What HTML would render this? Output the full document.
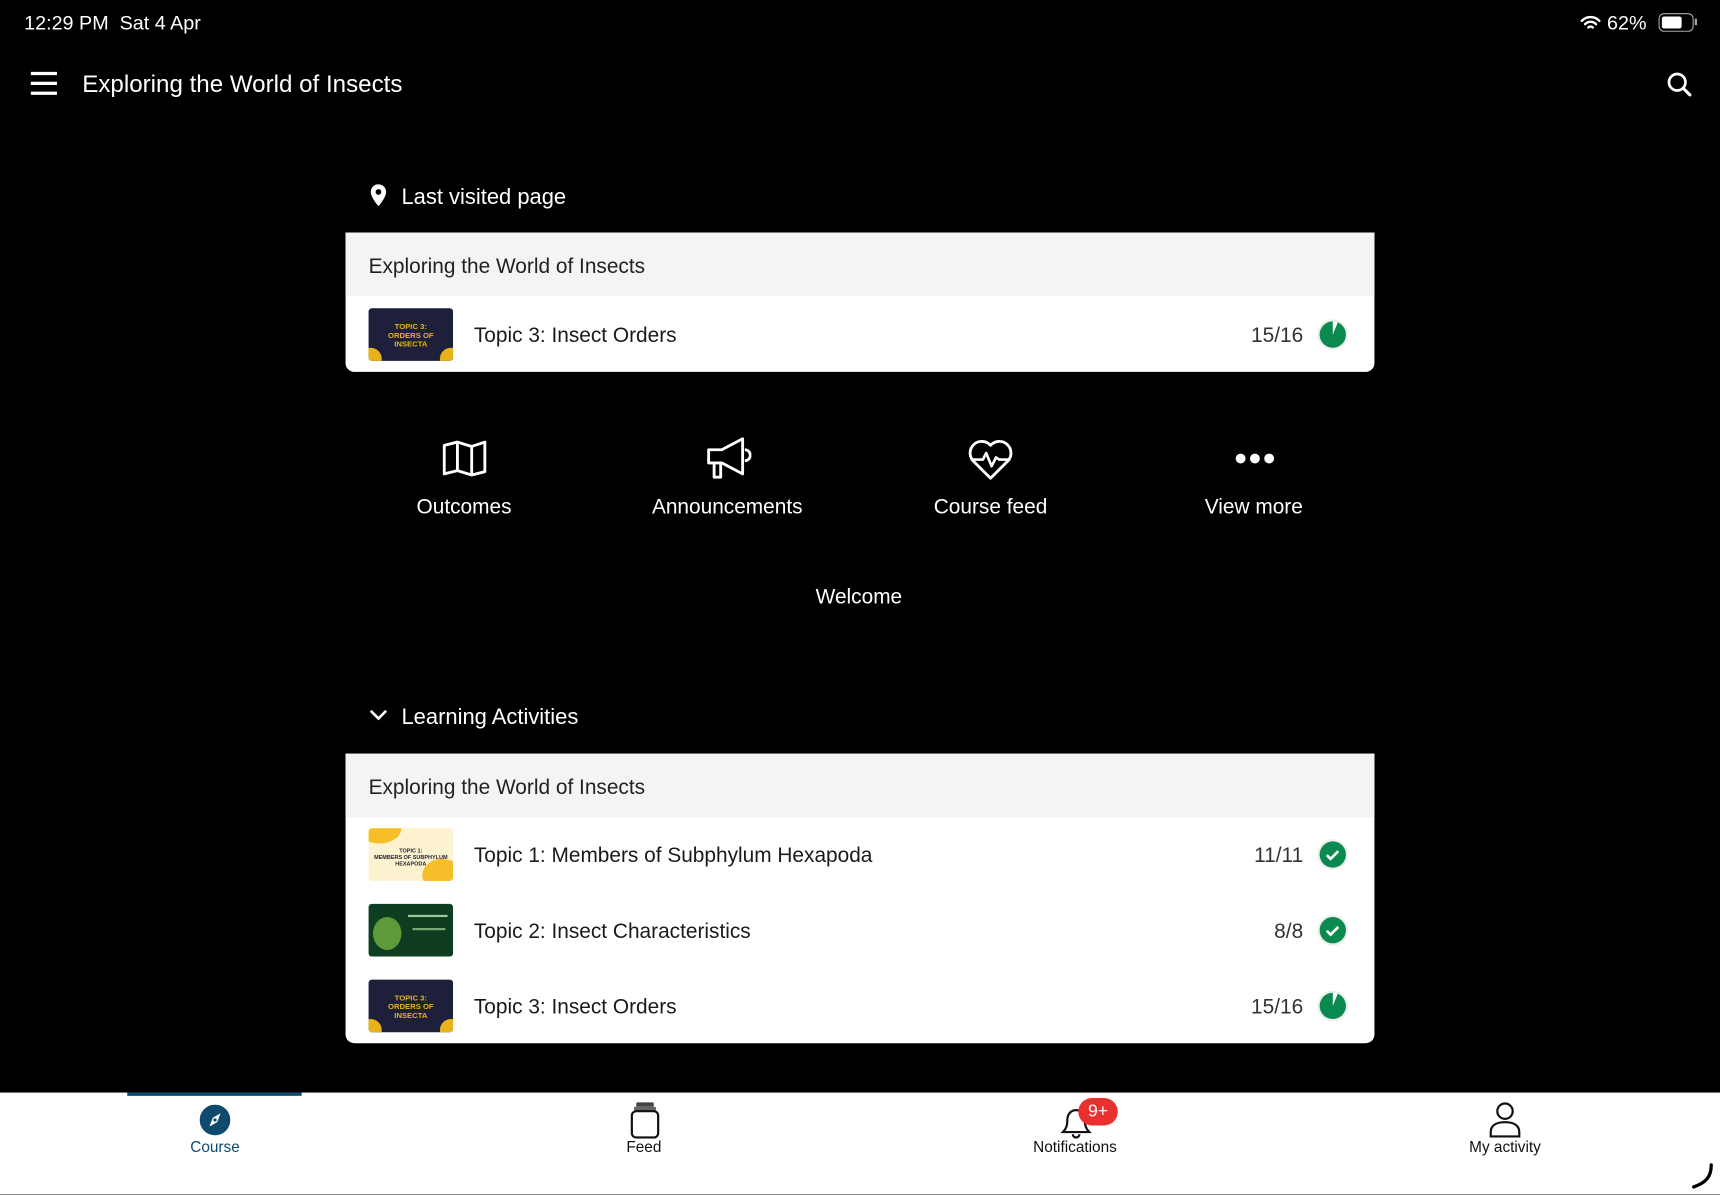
<!DOCTYPE html>
<html><head><meta charset="utf-8"><style>
html,body{margin:0;padding:0;background:#000;overflow:hidden;}
body{width:1720px;height:1195px;}
#w{position:absolute;left:0;top:0;width:1568px;height:1089px;transform:scale(1.09694);transform-origin:0 0;font-family:"Liberation Sans",sans-serif;color:#fff;background:#000;}
.a{position:absolute;}
.card{position:absolute;left:315px;width:938px;background:#fff;border-radius:0 0 8px 8px;overflow:hidden;color:#1a1a1a;}
.ch{height:58px;background:#f4f4f4;font-size:19px;line-height:64px;padding-left:21px;color:#222;box-sizing:border-box;}
.row{position:relative;height:69px;}
.th{position:absolute;left:21px;top:11px;width:77px;height:48px;border-radius:3px;overflow:hidden;}
.tt{position:absolute;left:117px;top:2px;line-height:69px;font-size:19px;font-weight:500;color:#1a1a1a;}
.cnt{position:absolute;right:65px;top:2px;line-height:69px;font-size:19px;color:#333;}
.st{position:absolute;right:24px;top:21px;}
.lbl{position:absolute;font-size:19px;text-align:center;width:240px;}
.nl{position:absolute;font-size:14px;color:#111;text-align:center;width:200px;top:1037px;}
</style></head><body><div id="w">
<div class="a" style="left:22px;top:11px;font-size:18px;">12:29 PM&nbsp;&nbsp;Sat 4 Apr</div>
<div class="a" style="left:1440px;top:11px;font-size:18px;">
<svg width="20" height="16" viewBox="0 0 20 16" style="vertical-align:-2px"><path d="M2 6a11 11 0 0 1 16 0M5 9a7 7 0 0 1 10 0M8 12a3 3 0 0 1 4 0" stroke="#fff" stroke-width="2.2" fill="none" stroke-linecap="round"/></svg> 62%</div>
<div class="a" style="left:1512px;top:12px;width:30px;height:15px;border:1.5px solid #aaa;border-radius:5px;"><div style="margin:2px;width:18px;height:11px;background:#fff;border-radius:2px"></div></div>
<div class="a" style="left:1545px;top:17px;width:2px;height:6px;background:#aaa"></div>
<svg class="a" style="left:28px;top:65px" width="24" height="22"><path d="M0 2h24M0 11h24M0 20h24" stroke="#fff" stroke-width="3"/></svg>
<div class="a" style="left:75px;top:64px;font-size:22px;font-weight:500;">Exploring the World of Insects</div>
<svg class="a" style="left:1519px;top:65px" width="24" height="24"><circle cx="10" cy="10" r="7.5" stroke="#fff" stroke-width="2.5" fill="none"/><path d="M15.5 15.5l6 6" stroke="#fff" stroke-width="2.8" stroke-linecap="round"/></svg>

<svg class="a" style="left:337px;top:168px" width="16" height="20" viewBox="0 0 16 20"><path d="M8 0a7 7 0 0 1 7 7c0 5-7 13-7 13S1 12 1 7a7 7 0 0 1 7-7z" fill="#fff"/><circle cx="8" cy="7" r="2.6" fill="#000"/></svg>
<div class="a" style="left:366px;top:169px;font-size:20px;font-weight:500;">Last visited page</div>

<div class="card" style="top:212px;">
<div class="ch">Exploring the World of Insects</div>
<div class="row"><div class="th" style="background:#1d1f3b"><div style="position:absolute;left:-8px;bottom:-8px;width:20px;height:20px;border-radius:50%;background:#e8b21a"></div><div style="position:absolute;right:-8px;bottom:-8px;width:20px;height:20px;border-radius:50%;background:#e8b21a"></div><div style="position:absolute;left:0;right:0;top:14px;font-size:7px;text-align:center;color:#e8b21a;font-weight:bold;line-height:8px">TOPIC 3:<br>ORDERS OF<br>INSECTA</div></div>
<div class="tt">Topic 3: Insect Orders</div><div class="cnt">15/16</div>
<svg class="st" width="28" height="28"><circle cx="14" cy="14" r="14" fill="#eee"/><circle cx="14" cy="14" r="12" fill="#0b8a4f"/><path d="M14 14V2A12 12 0 0 1 18.6 2.9z" fill="#fff"/></svg></div>
</div>

<svg class="a" style="left:403px;top:401px" width="42" height="34" viewBox="0 0 42 34"><path d="M2 5l12-3 13 4 12-4v27l-12 3-13-4-12 3z M14 2v27 M27 6v27" stroke="#fff" stroke-width="2.6" fill="none" stroke-linejoin="round"/></svg>
<div class="lbl" style="left:303px;top:452px;">Outcomes</div>
<svg class="a" style="left:643px;top:398px" width="42" height="42" viewBox="0 0 42 42"><path d="M3 12h12l19-10v32L15 24H3z M8 24v13h6V24 M36 12a5 5 0 0 1 0 10" stroke="#fff" stroke-width="2.6" fill="none" stroke-linejoin="round"/></svg>
<div class="lbl" style="left:543px;top:452px;">Announcements</div>
<svg class="a" style="left:882px;top:400px" width="42" height="38" viewBox="0 0 42 38"><path d="M21 36L5 20A10 10 0 0 1 21 6a10 10 0 0 1 16 14z" stroke="#fff" stroke-width="2.6" fill="none" stroke-linejoin="round"/><path d="M3 19h11l3-6 5 12 4-8 3 2h10" stroke="#fff" stroke-width="2.4" fill="none" stroke-linejoin="round"/></svg>
<div class="lbl" style="left:783px;top:452px;">Course feed</div>
<svg class="a" style="left:1126px;top:412px" width="36" height="12"><circle cx="5" cy="6" r="4.5" fill="#fff"/><circle cx="18" cy="6" r="4.5" fill="#fff"/><circle cx="31" cy="6" r="4.5" fill="#fff"/></svg>
<div class="lbl" style="left:1023px;top:452px;">View more</div>
<div class="lbl" style="left:663px;top:534px;">Welcome</div>

<svg class="a" style="left:336px;top:645px" width="18" height="14"><path d="M2 3l7 7 7-7" stroke="#fff" stroke-width="2.4" fill="none"/></svg>
<div class="a" style="left:366px;top:643px;font-size:20px;font-weight:500;">Learning Activities</div>

<div class="card" style="top:687px;">
<div class="ch">Exploring the World of Insects</div>
<div class="row" style="margin-top:-1px"><div class="th" style="background:#fdf2d0"><div style="position:absolute;left:-10px;top:-14px;width:40px;height:28px;border-radius:50%;background:#f6bf2a"></div><div style="position:absolute;right:-8px;bottom:-10px;width:36px;height:30px;border-radius:50%;background:#f6bf2a"></div><div style="position:absolute;left:0;right:0;top:18px;font-size:5px;text-align:center;color:#223;font-weight:bold;line-height:6px">TOPIC 1:<br>MEMBERS OF SUBPHYLUM<br>HEXAPODA</div></div>
<div class="tt">Topic 1: Members of Subphylum Hexapoda</div><div class="cnt">11/11</div>
<svg class="st" width="28" height="28"><circle cx="14" cy="14" r="14" fill="#eee"/><circle cx="14" cy="14" r="12" fill="#0b8a4f"/><path d="M8.5 14.5l3.5 3.5 7-7" stroke="#fff" stroke-width="2.4" fill="none"/></svg></div>
<div class="row"><div class="th" style="background:#0f3d22"><div style="position:absolute;left:4px;top:12px;width:26px;height:30px;border-radius:50%;background:#5c9a3a"></div><div style="position:absolute;left:36px;top:10px;width:36px;height:2px;background:#9c9"></div><div style="position:absolute;left:40px;top:22px;width:30px;height:2px;background:#7a7"></div></div>
<div class="tt">Topic 2: Insect Characteristics</div><div class="cnt">8/8</div>
<svg class="st" width="28" height="28"><circle cx="14" cy="14" r="14" fill="#eee"/><circle cx="14" cy="14" r="12" fill="#0b8a4f"/><path d="M8.5 14.5l3.5 3.5 7-7" stroke="#fff" stroke-width="2.4" fill="none"/></svg></div>
<div class="row"><div class="th" style="background:#1d1f3b"><div style="position:absolute;left:-8px;bottom:-8px;width:20px;height:20px;border-radius:50%;background:#e8b21a"></div><div style="position:absolute;right:-8px;bottom:-8px;width:20px;height:20px;border-radius:50%;background:#e8b21a"></div><div style="position:absolute;left:0;right:0;top:14px;font-size:7px;text-align:center;color:#e8b21a;font-weight:bold;line-height:8px">TOPIC 3:<br>ORDERS OF<br>INSECTA</div></div>
<div class="tt">Topic 3: Insect Orders</div><div class="cnt">15/16</div>
<svg class="st" width="28" height="28"><circle cx="14" cy="14" r="14" fill="#eee"/><circle cx="14" cy="14" r="12" fill="#0b8a4f"/><path d="M14 14V2A12 12 0 0 1 18.6 2.9z" fill="#fff"/></svg></div>
</div>

<div class="a" style="left:0;top:996px;width:1568px;height:93px;background:#fff;"></div>
<div class="a" style="left:116px;top:996px;width:159px;height:3px;background:#0f4a6e;"></div>
<svg class="a" style="left:182px;top:1007px" width="28" height="28"><circle cx="14" cy="14" r="14" fill="#0f4a6e"/><path d="M19 8l-3 8-7 4 3-8z" fill="#fff"/><circle cx="14" cy="14" r="1.5" fill="#0f4a6e"/></svg>
<div class="nl" style="left:96px;color:#0f4a6e;">Course</div>
<svg class="a" style="left:574px;top:1004px" width="28" height="34"><rect x="6" y="1" width="16" height="4" rx="1" fill="#444"/><rect x="4" y="5" width="20" height="4" rx="1" fill="#666"/><rect x="2" y="9" width="24" height="24" rx="4" stroke="#111" stroke-width="2" fill="none"/></svg>
<div class="nl" style="left:487px;">Feed</div>
<svg class="a" style="left:964px;top:1004px" width="34" height="34"><path d="M5 28h24c-3-3-4-6-4-11 0-5-3-9-8-9s-8 4-8 9c0 5-1 8-4 11z M14 30a3 3 0 0 0 6 0" stroke="#111" stroke-width="2" fill="none"/></svg>
<div class="a" style="left:983px;top:1001px;width:36px;height:25px;border-radius:13px;background:#e8312e;color:#fff;font-size:16px;text-align:center;line-height:25px;">9+</div>
<div class="nl" style="left:880px;">Notifications</div>
<svg class="a" style="left:1356px;top:1004px" width="32" height="34"><circle cx="16" cy="9" r="7" stroke="#111" stroke-width="2" fill="none"/><path d="M3 32v-4c0-6 5-9 13-9s13 3 13 9v4z" stroke="#111" stroke-width="2" fill="none"/></svg>
<div class="nl" style="left:1272px;">My activity</div>
<svg class="a" style="left:1540px;top:1060px" width="24" height="24"><path d="M20 2c0 10-4 16-16 20" stroke="#000" stroke-width="3" fill="none" stroke-linecap="round"/></svg>
</div></body></html>
